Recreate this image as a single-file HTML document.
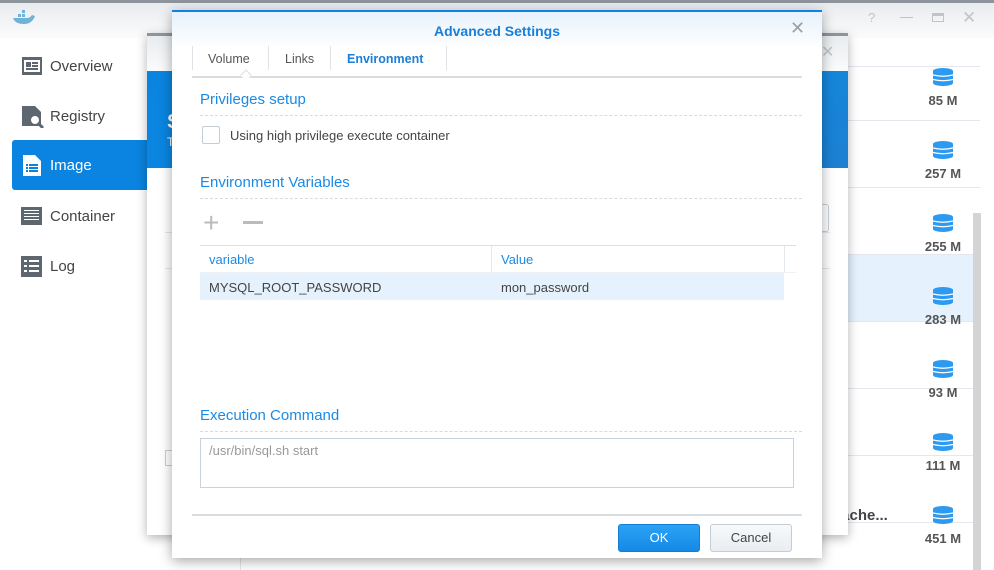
<!DOCTYPE html>
<html><head><style>
*{margin:0;padding:0;box-sizing:border-box}
body{width:994px;height:570px;overflow:hidden;background:#fff;font-family:"Liberation Sans",sans-serif;position:relative;color:#333}
.abs{position:absolute}
.nav{position:absolute;left:12px;width:200px;height:50px;font-size:15px;color:#444;display:flex;align-items:center;padding-left:38px}
.nav svg{position:absolute;left:9px;top:15px}
.row{position:absolute;left:240px;width:740px;border-top:1px solid #e3e8ee}
.sz{position:absolute;left:910px;width:66px;text-align:center;font-size:13px;font-weight:bold;color:#555}
.db{position:absolute;left:933px}
.sec{position:absolute;left:200px;width:602px;font-size:15px;color:#1a8ae6;border-bottom:1px dashed #d4dbe3;padding-bottom:7px}
.tab{position:absolute;top:52px;font-size:12.5px;color:#555}
</style></head><body>
<div class="abs" style="left:0;top:0;width:994px;height:3px;background:#8d949b"></div>
<div class="abs" style="left:0;top:3px;width:994px;height:35px;background:linear-gradient(#e9ecef,#fafbfc)"></div>
<svg class="abs" style="left:12px;top:10px" width="24" height="16"><path d="M1 8 Q3 14 12 14 Q20 14 23 6 L20 5 Q18 8 15 8 L2 8Z" fill="#6fb3d9"/><rect x="6" y="4" width="3" height="3" fill="#6fb3d9"/><rect x="10" y="4" width="3" height="3" fill="#6fb3d9"/><rect x="10" y="0" width="3" height="3" fill="#6fb3d9"/></svg>
<div class="abs" style="left:868px;top:10px;font-size:13px;color:#c0c4c8">?</div>
<div class="abs" style="left:900px;top:17px;width:13px;height:1px;background:#c0c4c8"></div>
<div class="abs" style="left:932px;top:13px;width:12px;height:9px;border:1px solid #c0c4c8;border-top-width:3px"></div>
<div class="abs" style="left:962px;top:8px;font-size:17px;color:#c0c4c8">✕</div>

<div class="nav" style="top:41px"><svg width="22" height="20"><rect x="1" y="1" width="20" height="18" fill="#5e6670"/><rect x="3" y="4" width="16" height="12" fill="#fff"/><rect x="5" y="6" width="5" height="5" fill="#5e6670"/><rect x="11" y="6" width="6" height="2" fill="#5e6670"/><rect x="11" y="9" width="6" height="2" fill="#5e6670"/><rect x="5" y="12" width="12" height="2" fill="#5e6670"/></svg>Overview</div>
<div class="nav" style="top:91px"><svg width="24" height="22"><path d="M1 0H14L20 6V20H1Z" fill="#5e6670"/><circle cx="14" cy="14" r="5" fill="#fff" stroke="#5e6670" stroke-width="2"/><path d="M17 17L22 22" stroke="#5e6670" stroke-width="3"/></svg>Registry</div>
<div class="nav" style="top:140px;background:#0a84e0;color:#fff;border-radius:3px 0 0 3px"><svg width="22" height="22"><path d="M2 0H14L20 6V21H2Z" fill="#fff"/><g fill="#0a84e0"><rect x="5" y="9" width="2" height="2"/><rect x="8" y="9" width="9" height="2"/><rect x="5" y="12" width="2" height="2"/><rect x="8" y="12" width="9" height="2"/><rect x="5" y="15" width="2" height="2"/><rect x="8" y="15" width="9" height="2"/></g></svg>Image</div>
<div class="nav" style="top:191px"><svg width="22" height="20"><rect x="0" y="1" width="21" height="18" fill="#5e6670"/><g fill="#fff"><rect x="3" y="4" width="15" height="1"/><rect x="3" y="7" width="15" height="1"/><rect x="3" y="10" width="15" height="1"/><rect x="3" y="13" width="15" height="1"/></g></svg>Container</div>
<div class="nav" style="top:241px"><svg width="22" height="22"><rect x="0" y="0" width="21" height="21" fill="#5e6670"/><g fill="#fff"><rect x="3" y="4" width="3" height="2"/><rect x="8" y="4" width="10" height="2"/><rect x="3" y="9" width="3" height="2"/><rect x="8" y="9" width="10" height="2"/><rect x="3" y="14" width="3" height="2"/><rect x="8" y="14" width="10" height="2"/></g></svg>Log</div>

<div class="abs" style="left:240px;top:38px;width:1px;height:532px;background:#e3e8ee"></div>
<div class="row" style="top:66px"></div>
<div class="row" style="top:120px"></div>
<div class="row" style="top:187px"></div>
<div class="row" style="top:254px;height:68px;background:#e5f2fd"></div>
<div class="row" style="top:321px"></div>
<div class="row" style="top:388px"></div>
<div class="row" style="top:455px"></div>
<div class="row" style="top:522px"></div>
<div class="abs" style="left:973px;top:213px;width:8px;height:357px;background:#d4d4d4"></div>
<div class="abs" style="left:832px;top:507px;font-size:15px;font-weight:bold;color:#444">pache...</div>
<svg width="0" height="0" style="position:absolute"><defs><g id="d"><ellipse cx="10" cy="3" rx="10" ry="3" fill="#2c9af0"/><rect x="0" y="3" width="20" height="12" fill="#2c9af0"/><ellipse cx="10" cy="15" rx="10" ry="3" fill="#2c9af0"/><path d="M0 7Q10 9.5 20 7M0 11.5Q10 14 20 11.5" stroke="#fff" fill="none" stroke-width="1.2"/></g></defs></svg>
<svg class="db" style="top:68px" width="20" height="18"><use href="#d"/></svg><div class="sz" style="top:93px">85 M</div>
<svg class="db" style="top:141px" width="20" height="18"><use href="#d"/></svg><div class="sz" style="top:166px">257 M</div>
<svg class="db" style="top:214px" width="20" height="18"><use href="#d"/></svg><div class="sz" style="top:239px">255 M</div>
<svg class="db" style="top:287px" width="20" height="18"><use href="#d"/></svg><div class="sz" style="top:312px">283 M</div>
<svg class="db" style="top:360px" width="20" height="18"><use href="#d"/></svg><div class="sz" style="top:385px">93 M</div>
<svg class="db" style="top:433px" width="20" height="18"><use href="#d"/></svg><div class="sz" style="top:458px">111 M</div>
<svg class="db" style="top:506px" width="20" height="18"><use href="#d"/></svg><div class="sz" style="top:531px">451 M</div>

<!-- background dialog -->
<div class="abs" style="left:147px;top:33px;width:701px;height:502px;background:#fff;border-top:3px solid #8d949b;box-shadow:0 3px 10px rgba(0,0,0,.3)">
 <div class="abs" style="left:0;top:0;width:701px;height:35px;background:linear-gradient(#e9ecef,#fafbfc)"></div>
 <div class="abs" style="left:674px;top:6px;color:#c0c4c8;font-size:16px">✕</div>
 <div class="abs" style="left:0;top:35px;width:701px;height:97px;background:linear-gradient(135deg,#0a84e0,#0a90e8 70%,#1e7fd0)"></div>
 <div class="abs" style="left:20px;top:75px;color:#fff;font-size:20px;font-weight:bold">S</div>
 <div class="abs" style="left:20px;top:99px;color:#fff;font-size:12px">T</div>
 <div class="abs" style="left:640px;top:168px;width:42px;height:28px;border:1px solid #c8d0d8;border-radius:3px"></div>
 <div class="abs" style="left:18px;top:196px;width:665px;border-top:1px solid #e3e8ee"></div>
 <div class="abs" style="left:18px;top:232px;width:665px;border-top:1px solid #e3e8ee"></div>
 <div class="abs" style="left:18px;top:414px;width:12px;height:16px;border:1px solid #c8d0d8"></div>
</div>

<!-- advanced dialog -->
<div class="abs" style="left:172px;top:10px;width:650px;height:548px;background:#fff;border-top:2px solid #0a84e0;box-shadow:0 3px 12px rgba(0,0,0,.35)">
 <div class="abs" style="left:0;top:0;width:650px;height:36px;background:linear-gradient(#e6f1fb,#fff)"></div>
 <div class="abs" style="left:0;top:11px;width:650px;text-align:center;font-size:14px;font-weight:bold;color:#1a7fd8">Advanced Settings</div>
 <div class="abs" style="left:618px;top:6px;font-size:18px;color:#9aa0a6">✕</div>
</div>
<div class="abs" style="left:192px;top:46px;width:1px;height:24px;background:#dfe3e7"></div>
<div class="tab" style="left:208px">Volume</div>
<div class="abs" style="left:268px;top:46px;width:1px;height:24px;background:#dfe3e7"></div>
<div class="tab" style="left:285px">Links</div>
<div class="abs" style="left:330px;top:46px;width:1px;height:24px;background:#dfe3e7"></div>
<div class="tab" style="left:347px;font-weight:bold;color:#1a7fd8">Environment</div>
<div class="abs" style="left:446px;top:46px;width:1px;height:24px;background:#dfe3e7"></div>
<div class="abs" style="left:192px;top:76px;width:610px;height:2px;background:#dadde0"></div>
<div class="abs" style="left:242px;top:71px;width:8px;height:8px;background:#fff;border-left:1px solid #dadde0;border-top:1px solid #dadde0;transform:rotate(45deg)"></div>

<div class="sec" style="top:91px">Privileges setup</div>
<div class="abs" style="left:202px;top:126px;width:18px;height:18px;border:1px solid #c4ccd4;border-radius:2px"></div>
<div class="abs" style="left:230px;top:128px;font-size:13px;color:#444">Using high privilege execute container</div>
<div class="sec" style="top:174px">Environment Variables</div>
<div class="abs" style="left:203px;top:213px;font-size:28px;line-height:20px;color:#b8bcc0">+</div>
<div class="abs" style="left:243px;top:221px;width:20px;height:3px;background:#b8bcc0"></div>
<div class="abs" style="left:200px;top:245px;width:596px;height:28px;border-top:1px solid #d8e0e8;border-bottom:1px solid #eef2f6"></div>
<div class="abs" style="left:491px;top:246px;width:1px;height:26px;background:#e3e8ee"></div>
<div class="abs" style="left:784px;top:246px;width:1px;height:26px;background:#e3e8ee"></div>
<div class="abs" style="left:209px;top:252px;font-size:13px;color:#1a8ae6">variable</div>
<div class="abs" style="left:501px;top:252px;font-size:13px;color:#1a8ae6">Value</div>
<div class="abs" style="left:200px;top:273px;width:584px;height:27px;background:#e5f2fd"></div>
<div class="abs" style="left:209px;top:280px;font-size:13px;color:#444">MYSQL_ROOT_PASSWORD</div>
<div class="abs" style="left:501px;top:280px;font-size:13px;color:#444">mon_password</div>
<div class="sec" style="top:407px">Execution Command</div>
<div class="abs" style="left:200px;top:438px;width:594px;height:50px;border:1px solid #c8d2dc"></div>
<div class="abs" style="left:209px;top:443px;font-size:13px;color:#999">/usr/bin/sql.sh start</div>
<div class="abs" style="left:192px;top:514px;width:610px;height:2px;background:#dadde0"></div>
<div class="abs" style="left:618px;top:524px;width:82px;height:28px;background:linear-gradient(#2ba3f5,#1589e6);border:1px solid #137ed4;border-radius:3px;color:#fff;font-size:13px;text-align:center;line-height:26px">OK</div>
<div class="abs" style="left:710px;top:524px;width:82px;height:28px;background:linear-gradient(#f7f9fb,#e9edf1);border:1px solid #c4ccd4;border-radius:3px;color:#444;font-size:13px;text-align:center;line-height:26px">Cancel</div>
</body></html>
